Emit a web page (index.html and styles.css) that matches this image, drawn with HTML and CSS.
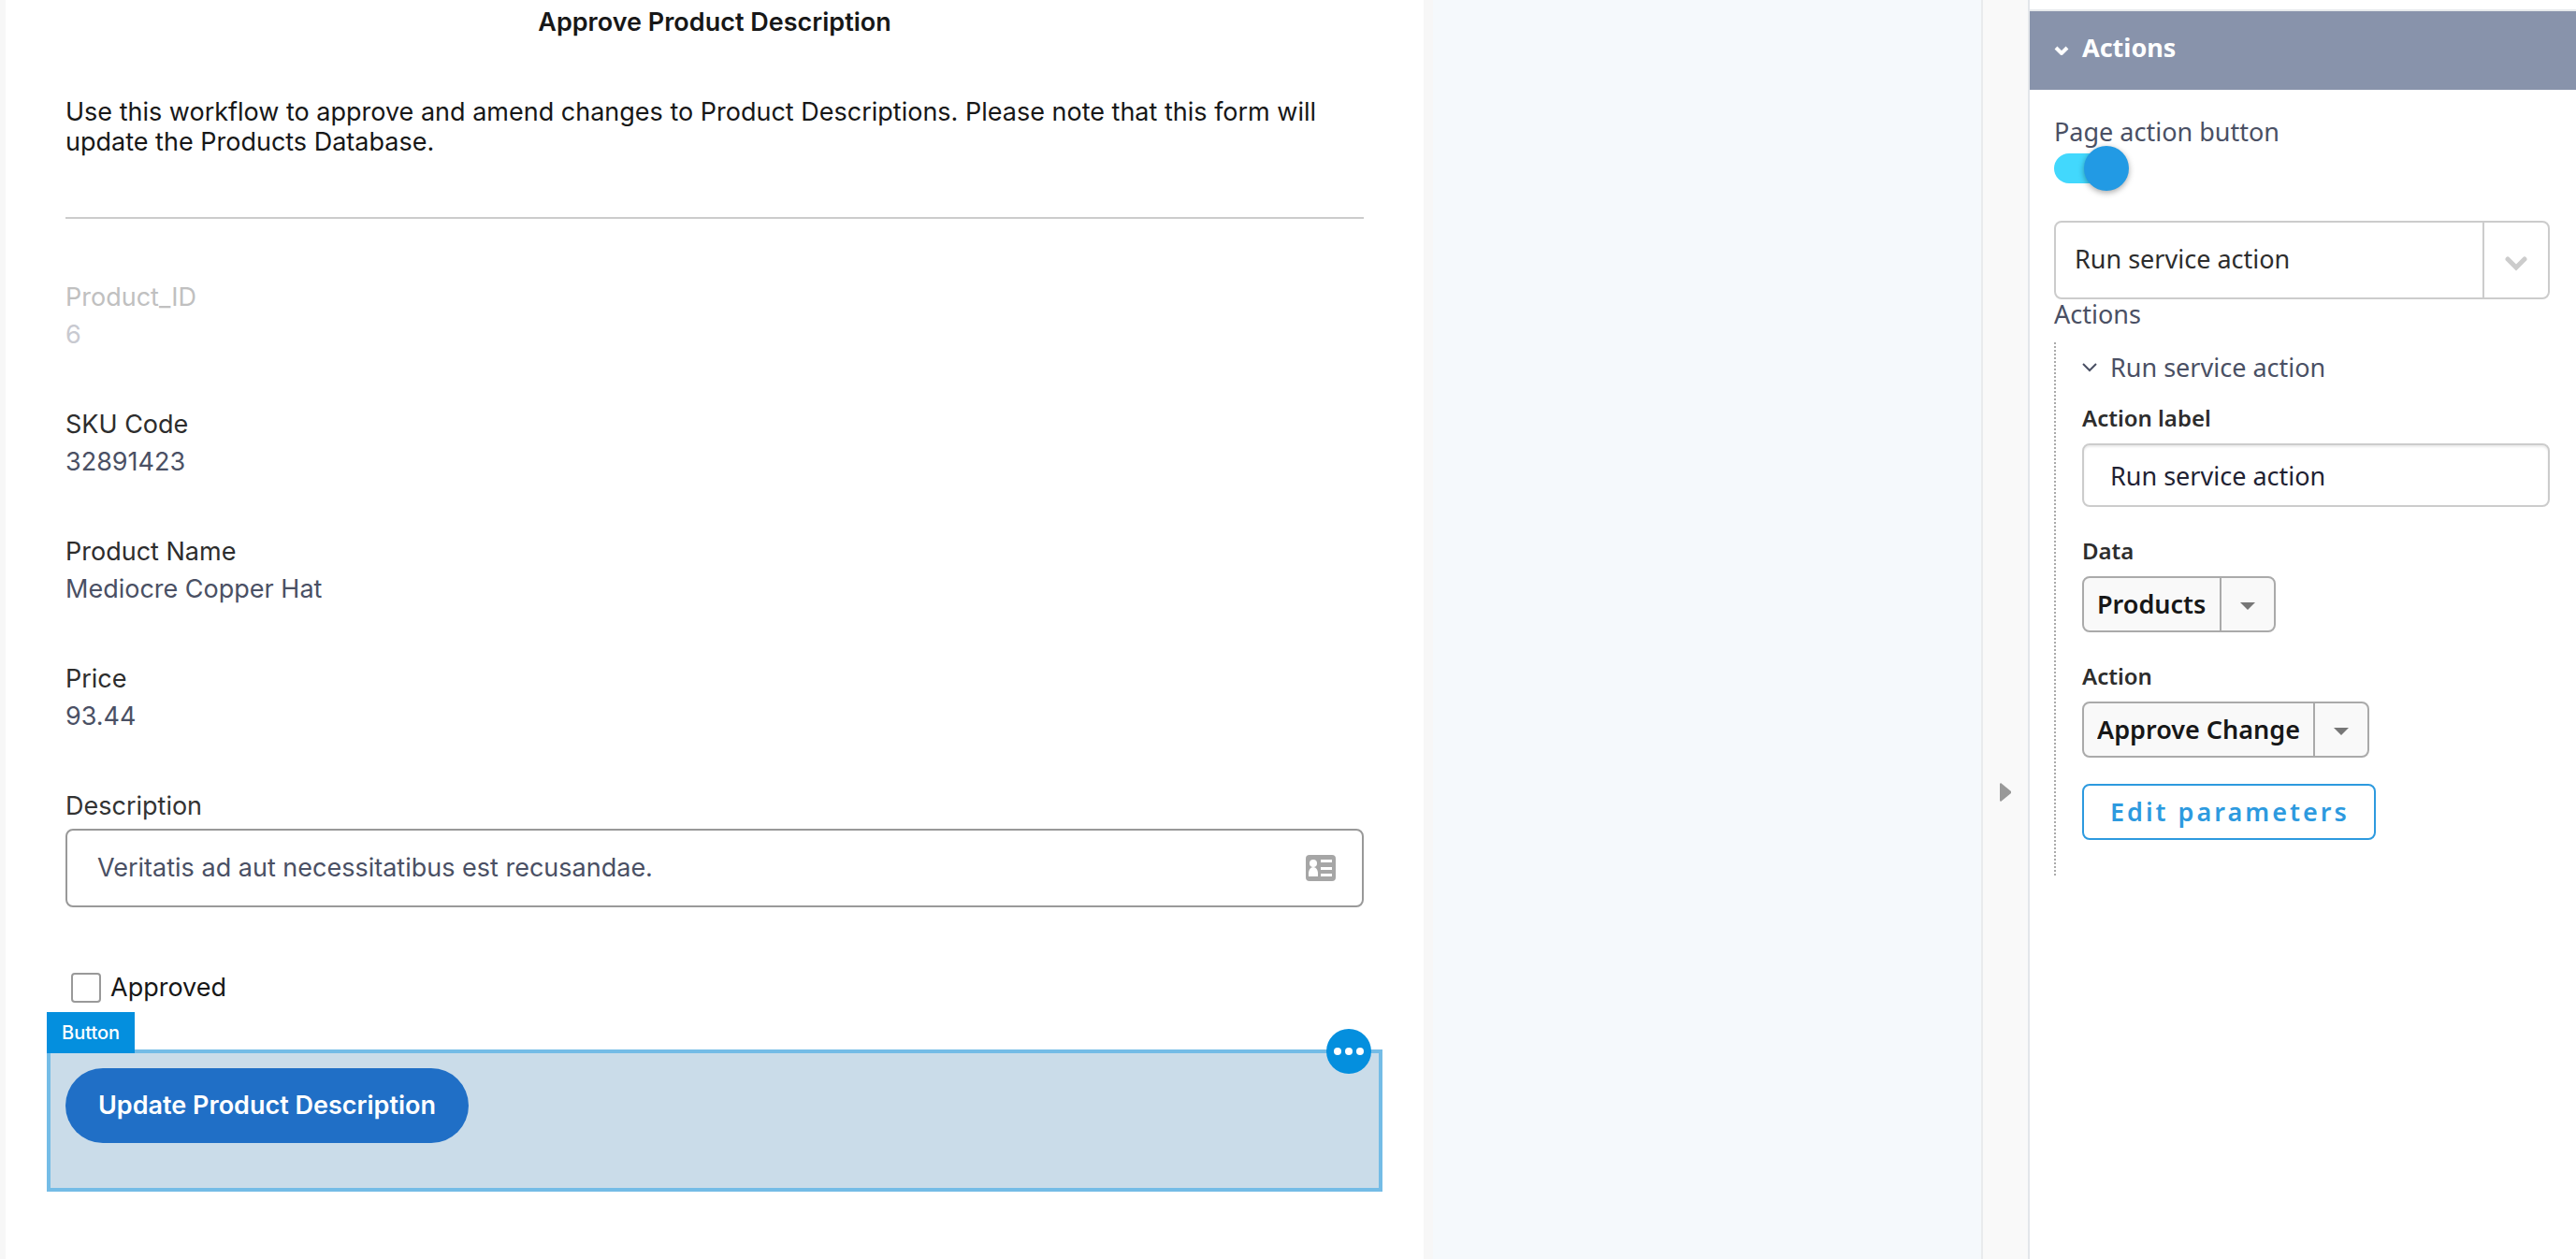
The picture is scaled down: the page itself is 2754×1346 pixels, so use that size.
FILE: index.html
```html
<!DOCTYPE html>
<html lang="en">
<head>
<meta charset="utf-8">
<meta name="viewport" content="width=device-width, initial-scale=1">
<title>Approve Product Description</title>
<link rel="stylesheet" href="styles.css">
</head>
<body>
<div class="editor">
  <main class="canvas">
    <div class="page-frame">
      <form class="page">
        <h1 class="page-title">Approve Product Description</h1>
        <p class="intro">Use this workflow to approve and amend changes to Product Descriptions. Please note that this form will update the Products Database.</p>
        <hr class="rule">
        <dl class="fields">
          <div class="field field-muted"><dt>Product_ID</dt><dd>6</dd></div>
          <div class="field"><dt>SKU Code</dt><dd>32891423</dd></div>
          <div class="field"><dt>Product Name</dt><dd>Mediocre Copper Hat</dd></div>
          <div class="field"><dt>Price</dt><dd>93.44</dd></div>
        </dl>
        <label class="text-label" for="description">Description</label>
        <div class="text-box">
          <input id="description" type="text" value="Veritatis ad aut necessitatibus est recusandae.">
          <svg class="card-icon" viewBox="0 0 32 28" aria-hidden="true">
            <rect width="32" height="28" rx="4" fill="#a6a6a6"/>
            <circle cx="8" cy="9" r="4" fill="#fff"/>
            <path d="M3 23v-3c0-4 2-7 5-7s5 3 5 7v3z" fill="#fff"/>
            <path d="M16 5h12v3H16zM16 13h12v3H16zM16 20h12v3H16z" fill="#fff"/>
          </svg>
        </div>
        <label class="check"><input type="checkbox"><span>Approved</span></label>
        <div class="selection">
          <span class="selection-tag">Button</span>
          <button class="selection-menu" type="button" aria-label="More options">
            <svg viewBox="0 0 48 48" aria-hidden="true"><circle cx="12" cy="24" r="4"/><circle cx="24" cy="24" r="4"/><circle cx="36" cy="24" r="4"/></svg>
          </button>
          <button class="submit" type="button">Update Product Description</button>
        </div>
      </form>
    </div>
  </main>

  <button class="divider" type="button" aria-label="Collapse panel">
    <svg viewBox="0 0 12 20" aria-hidden="true"><path d="M1 0 12 9v2L1 20 0 19V1z" fill="#999"/></svg>
  </button>

  <aside class="panel">
    <h2 class="panel-header">
      <svg class="chevron" viewBox="0 0 16 10" aria-hidden="true"><path d="M2 2l6 6 6-6"/></svg>
      Actions
    </h2>
    <div class="panel-body">
      <label class="switch">
        <span>Page action button</span>
        <input type="checkbox" role="switch" checked>
      </label>
      <div class="select">
        <select aria-label="Page action"><option>Run service action</option></select>
        <span class="select-arrow"><svg viewBox="0 0 24 16" aria-hidden="true"><path d="M3 3l9 9 9-9"/></svg></span>
      </div>
      <h3 class="group-title">Actions</h3>
      <div class="group">
        <h4 class="action-title">
          <svg class="chevron" viewBox="0 0 16 10" aria-hidden="true"><path d="M1 1l7 7 7-7"/></svg>
          Run service action
        </h4>
        <div class="control">
          <label for="action-label">Action label</label>
          <input id="action-label" class="action-input" type="text" value="Run service action">
        </div>
        <div class="control">
          <label for="data">Data</label>
          <div class="picker">
            <select id="data"><option>Products</option></select>
            <span class="picker-arrow"><svg viewBox="0 0 16 8" aria-hidden="true"><path d="M0 0h16L8 8z"/></svg></span>
          </div>
        </div>
        <div class="control">
          <label for="action">Action</label>
          <div class="picker">
            <select id="action"><option>Approve Change</option></select>
            <span class="picker-arrow"><svg viewBox="0 0 16 8" aria-hidden="true"><path d="M0 0h16L8 8z"/></svg></span>
          </div>
        </div>
        <button class="edit" type="button">Edit parameters</button>
      </div>
    </div>
  </aside>
</div>
</body>
</html>
```
FILE: styles.css
```css
* { box-sizing: border-box; }

body {
  margin: 0;
  background: #fff;
}

h1, h2, h3, h4, p, dl, dd { margin: 0; }

button, input, select {
  margin: 0;
  font: inherit;
  color: inherit;
}

.editor {
  display: flex;
  min-height: 100vh;
}

/* Canvas with the page being edited */
.canvas {
  flex: 1;
  min-width: 0;
  display: grid;
  grid-template-columns: minmax(0, 1532fr) minmax(0, 586fr);
  background: #f5f9fc;
  font: 27px/40px Inter, "Liberation Sans", sans-serif;
}

.page-frame {
  display: flex;
  padding: 0 10px 0 6px;
  background: #f7f7f7;
}

.page {
  flex: 1;
  min-width: 0;
  display: flex;
  flex-direction: column;
  padding: 4px 64px 72px;
  background: #fff;
}

.page-title {
  font-size: 27px;
  font-weight: 600;
  line-height: 40px;
  text-align: center;
  color: #171717;
}

.intro {
  margin-top: 60px;
  line-height: 32px;
  color: #171717;
}

.rule {
  width: 100%;
  height: 2px;
  margin: 64px 0;
  border: 0;
  background: #ccc;
}

.fields {
  display: grid;
  gap: 56px;
}

.field dt { color: #2d2d2d; }
.field dd { color: #4a5064; }
.field-muted dt { color: #c0c0c0; }
.field-muted dd { color: #c8c9d0; }

.text-label {
  margin-top: 56px;
  color: #333;
}

.text-box {
  display: flex;
  align-items: center;
  height: 84px;
  margin-top: 4px;
  padding: 0 28px 0 32px;
  border: 2px solid #999;
  border-radius: 8px;
}

.text-box input {
  flex: 1;
  min-width: 0;
  padding: 0;
  border: 0;
  outline: 0;
  background: none;
  color: #4a5064;
}

.card-icon {
  width: 32px;
  height: 28px;
}

.check {
  display: flex;
  align-items: center;
  align-self: flex-start;
  gap: 10px;
  margin: 66px 0 0 6px;
  color: #171717;
}

.check input {
  appearance: none;
  width: 32px;
  height: 32px;
  border: 2px solid #999;
  border-radius: 4px;
  background: #fff;
}

/* Outline around the selected component */
.selection {
  position: relative;
  height: 152px;
  margin: 46px -20px 0;
  padding: 16px;
  border: 4px solid #74bce6;
  background: #cadce9;
}

.selection-tag {
  position: absolute;
  left: -4px;
  bottom: 144px;
  padding: 0 16px;
  background: #048fde;
  color: #fff;
  font-size: 20px;
  font-weight: 500;
  line-height: 44px;
}

.selection-menu {
  position: absolute;
  top: -26px;
  right: 8px;
  width: 48px;
  height: 48px;
  padding: 0;
  border: 0;
  border-radius: 50%;
  background: #048fde;
}

.selection-menu svg {
  display: block;
  fill: #fff;
}

.submit {
  height: 80px;
  padding: 0 35px;
  border: 0;
  border-radius: 40px;
  background: #206fc6;
  color: #fff;
  font-weight: 600;
}

/* Collapse bar */
.divider {
  position: relative;
  flex: none;
  display: grid;
  place-items: center;
  align-content: start;
  width: 52px;
  padding: 837px 0 0;
  border: 0;
  border-left: 2px solid #e9ebed;
  border-right: 2px solid #e3e6ea;
  background: #f9f9f9;
}

.divider svg {
  width: 12px;
  height: 20px;
}

/* Settings panel */
.panel {
  flex: none;
  width: 584px;
  padding-top: 10px;
  color: #4a5064;
  font: 27px/40px "Noto Sans", "Open Sans", sans-serif;
}

.panel-header {
  display: flex;
  align-items: center;
  gap: 14px;
  height: 86px;
  padding: 0 26px 6px;
  border-top: 2px solid #e6e9eb;
  background: #8893ab;
  color: #fff;
  font-size: 27px;
  font-weight: 700;
}

.chevron {
  width: 16px;
  height: 10px;
  fill: none;
  stroke: currentColor;
  stroke-width: 2;
}

.panel-header .chevron {
  margin-top: 6px;
  stroke-width: 4;
}

.panel-body { padding: 25px 28px 40px 26px; }

.switch {
  display: grid;
  justify-items: start;
  gap: 3px;
}

.switch input {
  appearance: none;
  position: relative;
  width: 72px;
  height: 32px;
  border-radius: 16px;
  background: #42d8fd;
}

.switch input::before {
  content: "";
  position: absolute;
  top: -8px;
  right: -8px;
  width: 48px;
  height: 48px;
  border-radius: 50%;
  background: #229ae4;
  box-shadow: 0 2px 6px rgba(0, 0, 0, 0.35);
}

.select, .picker {
  position: relative;
  overflow: hidden;
  border-radius: 8px;
}

.select {
  height: 84px;
  margin-top: 40px;
  border: 2px solid #ccc;
  color: #2d2d2d;
}

.select select, .picker select {
  appearance: none;
  width: 100%;
  height: 100%;
  border: 0;
  outline: 0;
  background: none;
}

.select select { padding: 0 90px 2px 20px; }

.select-arrow, .picker-arrow {
  position: absolute;
  top: 0;
  right: 0;
  bottom: 0;
  display: grid;
  place-items: center;
  pointer-events: none;
}

.select-arrow {
  width: 70px;
  padding-top: 8px;
  border-left: 2px solid #ccc;
}

.select-arrow svg {
  width: 24px;
  height: 16px;
  fill: none;
  stroke: #ccc;
  stroke-width: 5;
  stroke-linecap: round;
}

.group-title {
  font-size: 27px;
  font-weight: 400;
  line-height: 32px;
}

.group {
  position: relative;
  margin-top: 14px;
  padding: 7px 0 38px 28px;
  border-left: 2px dotted #aaa;
}

.action-title {
  display: flex;
  align-items: center;
  gap: 14px;
  font-size: 27px;
  font-weight: 400;
}

.control {
  display: grid;
  justify-items: start;
  gap: 7px;
  margin-bottom: 27px;
}

.action-title + .control { margin-top: 14px; }

.control label {
  color: #2d2d2d;
  font-size: 24px;
  font-weight: 600;
}

.action-input {
  width: 100%;
  height: 68px;
  padding: 0 28px;
  border: 2px solid #ccc;
  border-radius: 8px;
  outline: 0;
  box-shadow: inset 0 2px 2px rgba(0, 0, 0, 0.08);
  color: #1f2233;
}

.picker {
  height: 60px;
  border: 2px solid #aaa;
  background: #f9f9f9;
  color: #171717;
  font-weight: 600;
}

.picker select { padding: 0 72px 0 14px; }

.picker-arrow {
  width: 58px;
  padding-top: 4px;
  border-left: 2px solid #aaa;
}

.picker-arrow svg {
  width: 16px;
  height: 8px;
  fill: #777;
}

.edit {
  display: block;
  height: 60px;
  margin-top: 28px;
  padding: 0 26px 0 28px;
  border: 2px solid #2d9adf;
  border-radius: 8px;
  background: #fff;
  color: #2d9adf;
  font-weight: 600;
  letter-spacing: 3px;
}
```
